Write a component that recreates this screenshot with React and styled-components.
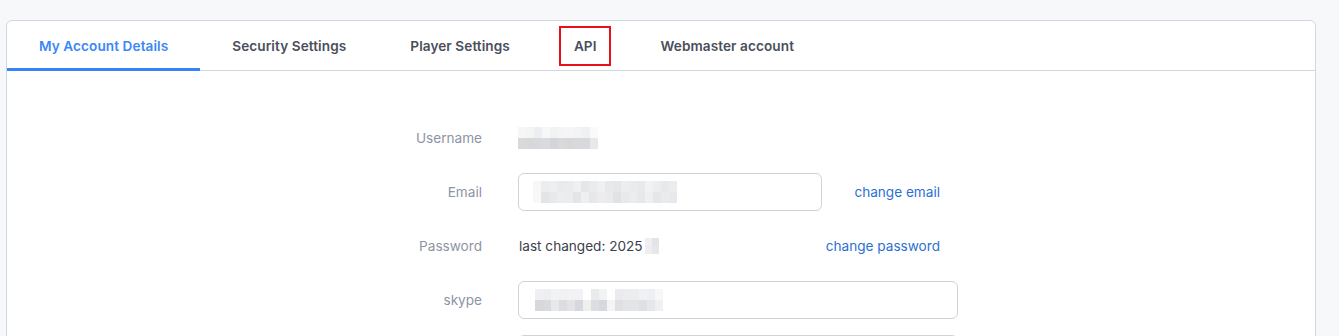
import React from "react";
import styled, { createGlobalStyle } from "styled-components";

const GlobalStyle = createGlobalStyle`
  html, body {
    margin: 0;
    padding: 0;
    background: #f7f8fa;
    font-family: Inter, "Noto Sans", "Liberation Sans", sans-serif;
    overflow: hidden;
  }
`;

const Page = styled.div`
  padding: 20px 23px 0 6px;
`;

const Card = styled.div`
  background: #fff;
  border: 1px solid #d3d7df;
  border-radius: 6px;
  height: 340px;
`;

const TabBar = styled.div`
  display: flex;
  height: 49px;
  border-bottom: 1px solid #d3d7df;
`;

const Tab = styled.div`
  display: flex;
  align-items: center;
  padding: 3px 32px 0;
  margin-bottom: -1px;
  font-size: 13.6px;
  font-weight: 600;
  letter-spacing: 0.08px;
  color: ${(p) => (p.$active ? "#3b87f5" : "#4a4f5b")};
  border-bottom: 3px solid ${(p) => (p.$active ? "#3385f6" : "transparent")};
`;

const Marked = styled.span`
  position: relative;

  &::after {
    content: "";
    position: absolute;
    left: -15px;
    right: -14px;
    top: -12px;
    bottom: -12px;
    border: 2px solid #e8101a;
  }
`;

const Form = styled.div`
  display: flex;
  flex-direction: column;
  gap: 16px;
  padding-top: 48px;
`;

const Row = styled.div`
  display: grid;
  grid-template-columns: 475px ${(p) => p.$width}px;
  column-gap: 36px;
  align-items: center;
  height: 38px;
`;

const Label = styled.div`
  text-align: right;
  font-size: 13.6px;
  color: #8c94a6;
`;

const Value = styled.div`
  display: flex;
  align-items: center;
  justify-content: space-between;
`;

const Text = styled.span`
  display: flex;
  align-items: center;
  padding-left: 1px;
  font-size: 13.6px;
  color: #3b404c;
`;

const Link = styled.a`
  font-size: 13.6px;
  color: #2c6fd3;
  text-decoration: none;
  cursor: pointer;
`;

const Input = styled.div`
  box-sizing: border-box;
  display: flex;
  align-items: center;
  width: ${(p) => p.$width}px;
  height: 38px;
  padding-left: ${(p) => p.$pad}px;
  border: 1px solid #cfd3da;
  border-radius: 6px;
  background: #fff;
`;

const Pixels = styled.div`
  display: flex;
  flex-direction: column;
  margin-left: ${(p) => p.$gap || 0}px;
`;

const PixelRow = styled.div`
  display: flex;
`;

const Cell = styled.div`
  width: ${(p) => p.$w}px;
  height: ${(p) => p.$h}px;
  background: ${(p) => p.$c};
`;

const Blur = ({ rows, w = 8, h = 11, gap }) => (
  <Pixels $gap={gap}>
    {rows.map((row, i) => (
      <PixelRow key={i}>
        {row.map((c, j) => (
          <Cell key={j} $w={w} $h={h} $c={c} />
        ))}
      </PixelRow>
    ))}
  </Pixels>
);

const usernameRows = [
  ["#f6f6f7", "#f5f4f5", "#eceef1", "#f7f7f8", "#f1f2f4", "#f4f4f6", "#f5f5f6", "#f3f3f5", "#eff0f2", "#fafafb"],
  ["#d9d9dc", "#d8d7da", "#d6d9dd", "#d9dbde", "#d3d5da", "#d9d8da", "#d8d6d8", "#d7d9dd", "#d7d9dc", "#e6e8ec"],
];

const emailRows = [
  ["#f7f7f8", "#ecedef", "#eeeff1", "#e9eaec", "#eaebed", "#eff0f2", "#e5e6e9", "#eaebed", "#eff0f1", "#e8e9eb", "#e6e7ea", "#ecedef", "#eaebed", "#e8e9ec", "#f1f2f3", "#ecedef", "#e7e8ea", "#ebecee"],
  ["#f8f8f9", "#e3e4e7", "#e8e9eb", "#ecedee", "#ebecee", "#e4e5e8", "#eeeff1", "#e6e7ea", "#ececee", "#e9eaec", "#e1e2e5", "#e8e9eb", "#ebecee", "#e7e8eb", "#eeeff1", "#e5e6e9", "#eaebed", "#e8e9ec"],
];

const pwRows = [
  ["#eeeff1", "#e3e4e7"],
  ["#eceef0", "#e6e7ea"],
];

const skypeRows = [
  ["#eef0f2", "#edeef0", "#f2f3f4", "#f1f1f3", "#f2f2f4", "#f2f2f4", "#fefefe", "#e9eaec", "#f2f2f4", "#fefefe", "#eaebee", "#ecedef", "#ecedef", "#f0f1f3", "#eeeff2", "#f7f7f8"],
  ["#d7d8dc", "#d9dade", "#e6e8ec", "#dddde1", "#e2e3e6", "#d5d8df", "#f0efef", "#dcdde1", "#d6d8df", "#f4f4f5", "#dfe0e4", "#e3e4e7", "#e3e4e7", "#dfe0e3", "#e6e7ea", "#eef0f3"],
];

const tabs = ["My Account Details", "Security Settings", "Player Settings", "API", "Webmaster account"];

export default function App() {
  return (
    <>
      <GlobalStyle />
      <Page>
        <Card>
          <TabBar>
            {tabs.map((t, i) => (
              <Tab key={t} $active={i === 0}>
                {t === "API" ? <Marked>{t}</Marked> : t}
              </Tab>
            ))}
          </TabBar>
          <Form>
            <Row $width={422}>
              <Label>Username</Label>
              <Value>
                <Blur rows={usernameRows} />
              </Value>
            </Row>
            <Row $width={422}>
              <Label>Email</Label>
              <Value>
                <Input $width={304} $pad={14}>
                  <Blur rows={emailRows} />
                </Input>
                <Link>change email</Link>
              </Value>
            </Row>
            <Row $width={422}>
              <Label>Password</Label>
              <Value>
                <Text>
                  last changed: 2025
                  <Blur rows={pwRows} w={7} h={8} gap={2} />
                </Text>
                <Link>change password</Link>
              </Value>
            </Row>
            <Row $width={440}>
              <Label>skype</Label>
              <Value>
                <Input $width={440} $pad={16}>
                  <Blur rows={skypeRows} />
                </Input>
              </Value>
            </Row>
            <Row $width={440}>
              <Label />
              <Value>
                <Input $width={440} $pad={16} />
              </Value>
            </Row>
          </Form>
        </Card>
      </Page>
    </>
  );
}
